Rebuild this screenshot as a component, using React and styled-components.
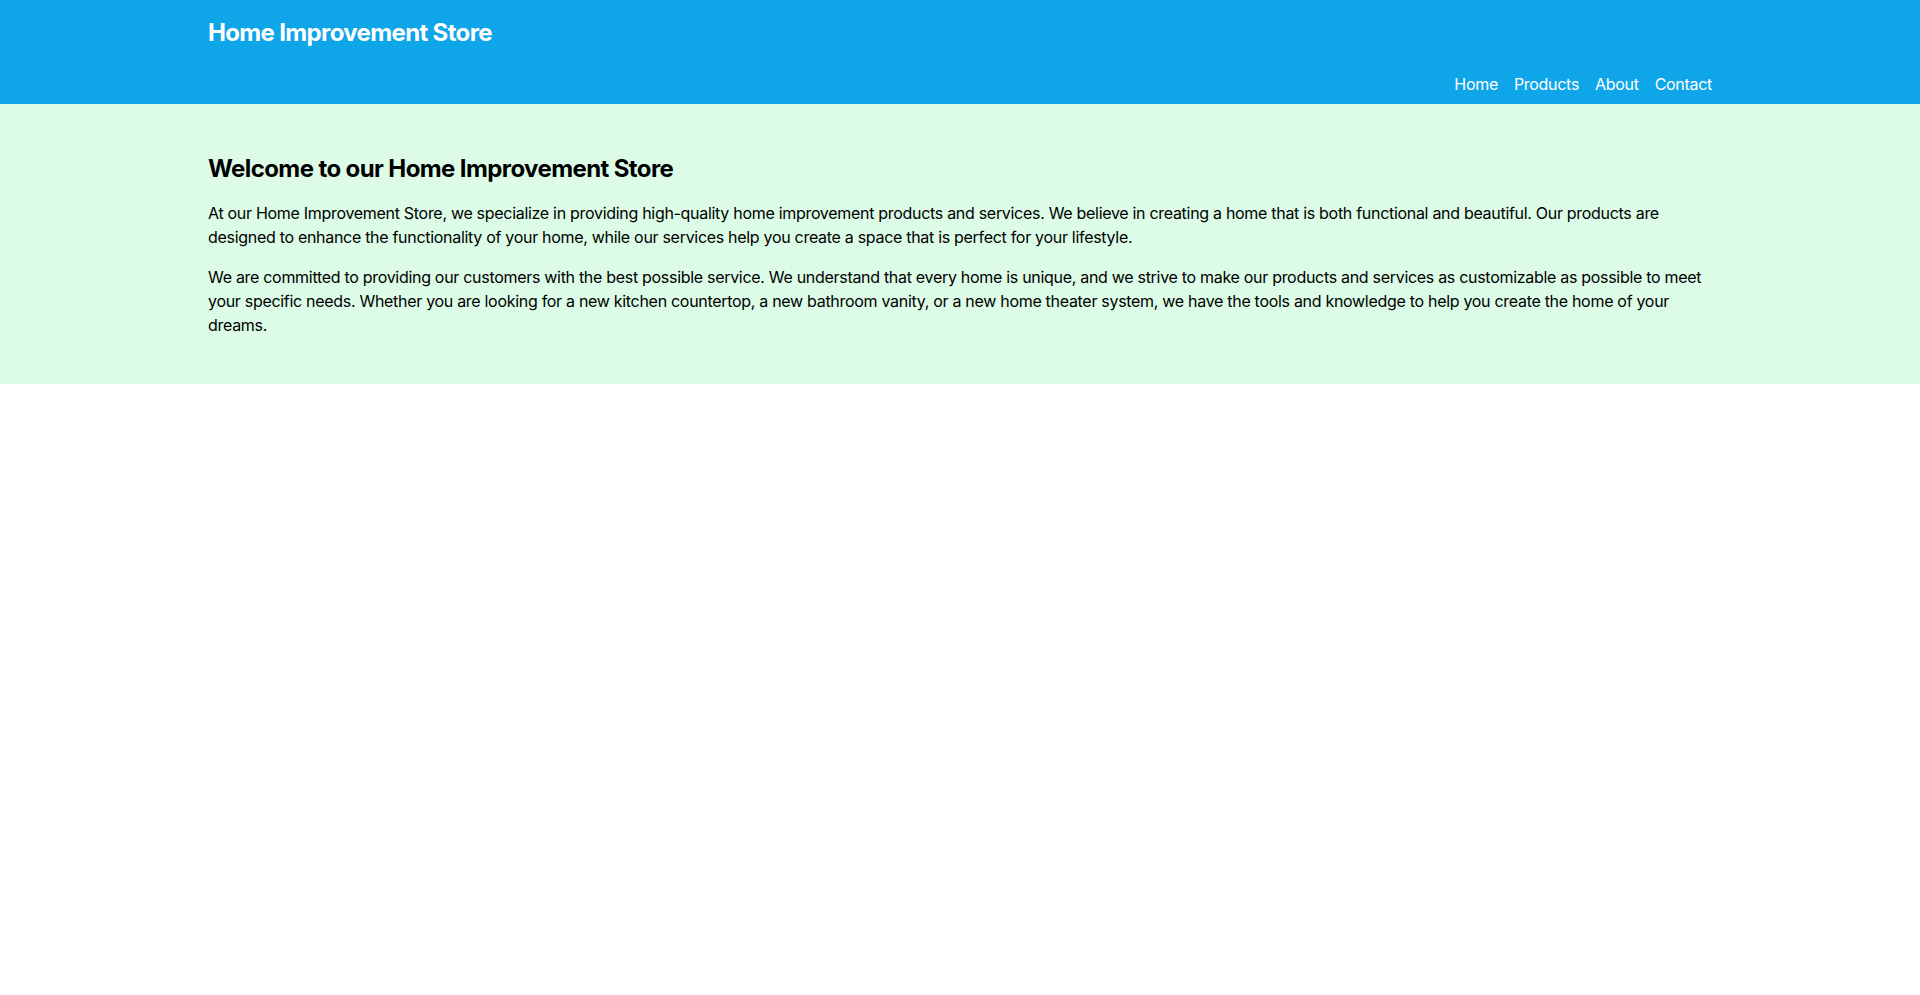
import React from 'react';
import styled, { createGlobalStyle } from 'styled-components';

const GlobalStyle = createGlobalStyle`
	* {
		box-sizing: border-box;
	}
	body {
		margin: 0;
		font-family: Inter, 'Noto Sans', sans-serif;
		color: #000;
		background: #fff;
	}
`;

const Container = styled.div`
	max-width: 1536px;
	margin: 0 auto;
	padding: 0 16px;
`;

const Header = styled.header`
	background: #0ea5e9;
	color: #fff;
	padding-top: 17px;
`;

const Brand = styled.h1`
	margin: 0 0 15px;
	font-size: 24px;
	line-height: 32px;
	font-weight: 700;
	letter-spacing: -0.65px;
`;

const Nav = styled.nav`
	display: flex;
	justify-content: flex-end;
	gap: 16px;
`;

const NavLink = styled.a`
	color: #fff;
	text-decoration: none;
	font-size: 16px;
	line-height: 24px;
	letter-spacing: -0.3px;
	padding: 8px 0;
`;

const Intro = styled.section`
	background: #dcfce7;
	padding: 49px 0 47px;
`;

const Heading = styled.h2`
	margin: 0 0 16px;
	font-size: 24px;
	line-height: 32px;
	font-weight: 700;
	letter-spacing: -0.6px;
`;

const Text = styled.p`
	margin: 0 0 16px;
	font-size: 16px;
	line-height: 24px;
	letter-spacing: -0.3px;
	&:last-child {
		margin-bottom: 0;
	}
`;

const links = ['Home', 'Products', 'About', 'Contact'];

const App = () => {
	return (
		<div>
			<GlobalStyle />
			<Header>
				<Container>
					<Brand>Home Improvement Store</Brand>
					<Nav>
						{links.map((l) => (
							<NavLink key={l} href="#">
								{l}
							</NavLink>
						))}
					</Nav>
				</Container>
			</Header>
			<Intro>
				<Container>
					<Heading>Welcome to our Home Improvement Store</Heading>
					<Text>
						At our Home Improvement Store, we specialize in providing high-quality home
						improvement products and services. We believe in creating a home that is both
						functional and beautiful. Our products are designed to enhance the functionality of
						your home, while our services help you create a space that is perfect for your
						lifestyle.
					</Text>
					<Text>
						We are committed to providing our customers with the best possible service. We
						understand that every home is unique, and we strive to make our products and
						services as customizable as possible to meet your specific needs. Whether you are
						looking for a new kitchen countertop, a new bathroom vanity, or a new home theater
						system, we have the tools and knowledge to help you create the home of your dreams.
					</Text>
				</Container>
			</Intro>
		</div>
	);
};

export default App;
